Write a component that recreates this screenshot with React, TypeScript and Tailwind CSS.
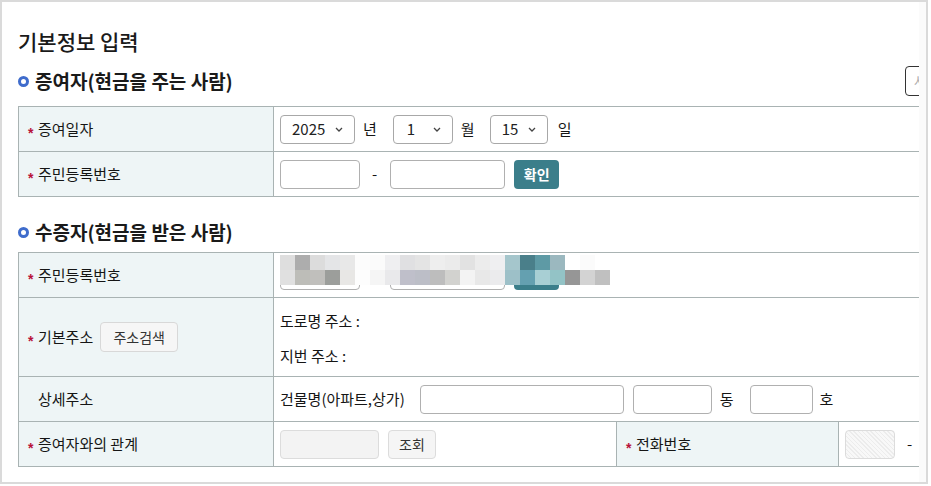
import React from 'react';

const line = 'border-[#a9b3b3]';

// blurred squares over the 수증자 주민번호 row
const mosaicTop = [
  'bg-[#dedede]', 'bg-[#adadad]', 'bg-[#dcdcdc]', 'bg-[#e4e5e7]', 'bg-[#e8e8e8]', 'bg-[#fcfcfc]', 'bg-[#fbfbfb]', 'bg-[#efeff1]',
  'bg-[#e0e0e2]', 'bg-[#e4e4e4]', 'bg-[#eeeeee]', 'bg-[#ebebeb]', 'bg-[#e2e2e2]', 'bg-[#ececec]', 'bg-[#efeff1]', 'bg-[#a5c6cc]',
  'bg-[#4a7f8a]', 'bg-[#5e9aa5]', 'bg-[#9bb8bf]', 'bg-[#ffffff]', 'bg-[#fbfbfb]', 'bg-[#ffffff]',
];
const mosaicBottom = [
  'bg-[#e0e0e0]', 'bg-[#bdbdb8]', 'bg-[#c0bfbc]', 'bg-[#9c9e9b]', 'bg-[#e8e7e5]', 'bg-[#fdfdfd]', 'bg-[#f5f5f5]', 'bg-[#e9e9eb]',
  'bg-[#bfbfca]', 'bg-[#bcbec7]', 'bg-[#bdbdbd]', 'bg-[#d2d2cf]', 'bg-[#f3f3f3]', 'bg-[#e8e8e8]', 'bg-[#ebebed]', 'bg-[#9dc0c8]',
  'bg-[#64a0b0]', 'bg-[#a8cfd4]', 'bg-[#93c3c6]', 'bg-[#969696]', 'bg-[#d3d3d3]', 'bg-[#c0c0c0]',
];

function Star({ hidden }: { hidden?: boolean }) {
  return (
    <span
      className={`inline-block w-[10px] translate-y-[4px] font-['Liberation_Sans',sans-serif] text-[14px] font-bold leading-none text-[#b8123a] ${hidden ? 'invisible' : ''}`}
    >
      *
    </span>
  );
}

function Label({ text, required = true, width = 'w-[255px]', children }: { text: string; required?: boolean; width?: string; children?: React.ReactNode }) {
  return (
    <div className={`flex ${width} shrink-0 items-center border-r ${line} bg-[#eef5f6] pl-[9px] text-[15px] text-[#151515]`}>
      <Star hidden={!required} />
      <span>{text}</span>
      {children}
    </div>
  );
}

function Heading({ text, button }: { text: string; button?: boolean }) {
  return (
    <div className="flex h-[30px] w-[960px] items-center">
      <span className="h-[11px] w-[11px] rounded-full border-[3px] border-[#3f6ccc]" />
      <span className="ml-[6px] text-[19px] font-semibold text-[#1a1a1a]">{text}</span>
      {button && (
        <button className="ml-auto h-[30px] w-[73px] rounded-[4px] border border-[#333] bg-white pl-[8px] text-left text-[13px] text-[#aaa]">
          사용안내
        </button>
      )}
    </div>
  );
}

function Select({ value, width, pl = 'pl-[11px]' }: { value: string; width: string; pl?: string }) {
  return (
    <div className={`flex h-[29px] ${width} items-center justify-between rounded-[4px] border border-[#a8a8a8] bg-white ${pl} pr-[11px] text-[15px] text-[#222]`}>
      <span>{value}</span>
      <svg width="8" height="5" viewBox="0 0 8 5" fill="none">
        <path d="M1 1l3 3 3-3" stroke="#444" strokeWidth="1.3" />
      </svg>
    </div>
  );
}

function Input({ width, extra = '' }: { width: string; extra?: string }) {
  return <div className={`h-[29px] ${width} rounded-[4px] border border-[#b0b0b0] bg-white ${extra}`} />;
}

function SsnInputs() {
  return (
    <>
      <Input width="w-[80px]" />
      <span className="ml-[12px] text-[15px]">-</span>
      <Input width="w-[115px]" extra="ml-[13px]" />
      <button className="ml-[9px] h-[29px] w-[45px] rounded-[4px] bg-[#3b7e8a] text-[14px] font-bold text-white">확인</button>
    </>
  );
}

export default function App() {
  return (
    <div className="h-[486px] w-[931px] bg-white font-['Noto_Sans_CJK_KR','Noto_Sans',sans-serif] text-[#151515]">
      <div className="flex h-[484px] w-[928px] border-2 border-[#dadada]">
        <div className="h-full w-[917px] overflow-hidden">
          <div className="w-[1100px] pl-[16px] pt-[25px]">
            <h1 className="h-[28px] text-[21px] font-medium leading-[28px] text-[#1a1a1a]">기본정보 입력</h1>

            <div className="mt-[11px]">
              <Heading text="증여자(현금을 주는 사람)" button />
            </div>

            <div className={`mt-[10px] w-[1000px] border-l border-t ${line}`}>
              <div className={`flex h-[45px] border-b ${line}`}>
                <Label text="증여일자" />
                <div className="flex items-center pl-[6px] text-[15px]">
                  <Select value="2025" width="w-[75px]" />
                  <span className="ml-[8px]">년</span>
                  <div className="ml-[16px]">
                    <Select value="1" width="w-[60px]" pl="pl-[13px]" />
                  </div>
                  <span className="ml-[8px]">월</span>
                  <div className="ml-[15px]">
                    <Select value="15" width="w-[58px]" />
                  </div>
                  <span className="ml-[10px]">일</span>
                </div>
              </div>
              <div className={`flex h-[45px] border-b ${line}`}>
                <Label text="주민등록번호" />
                <div className="flex items-center pl-[6px]">
                  <SsnInputs />
                </div>
              </div>
            </div>

            <div className="mt-[20px]">
              <Heading text="수증자(현금을 받은 사람)" />
            </div>

            <div className={`mt-[5px] w-[1000px] border-l border-t ${line}`}>
              <div className={`flex h-[45px] border-b ${line}`}>
                <Label text="주민등록번호" />
                <div className="relative flex items-center pl-[6px]">
                  <SsnInputs />
                  <div className="absolute left-[6px] top-[2px]">
                    {[mosaicTop, mosaicBottom].map((row, r) => (
                      <div key={r} className="flex">
                        {row.map((c, i) => (
                          <div key={i} className={`h-[15px] w-[15px] ${c}`} />
                        ))}
                      </div>
                    ))}
                  </div>
                </div>
              </div>

              <div className={`flex h-[79px] border-b ${line}`}>
                <Label text="기본주소">
                  <button className="ml-[7px] h-[30px] w-[78px] rounded-[4px] border border-[#d8d8d8] bg-[#f6f6f6] text-[14px] text-[#333]">
                    주소검색
                  </button>
                </Label>
                <div className="flex flex-col gap-[15px] pl-[6px] pt-[13px] text-[15px]">
                  <div className="h-[20px] leading-[20px]">도로명 주소 :</div>
                  <div className="h-[20px] leading-[20px]">지번 주소 :</div>
                </div>
              </div>

              <div className={`flex h-[45px] border-b ${line}`}>
                <Label text="상세주소" required={false} />
                <div className="flex items-center pl-[6px] text-[15px]">
                  <span>건물명(아파트,상가)</span>
                  <Input width="w-[204px]" extra="ml-[15px]" />
                  <Input width="w-[79px]" extra="ml-[9px]" />
                  <span className="ml-[8px]">동</span>
                  <Input width="w-[63px]" extra="ml-[16px]" />
                  <span className="ml-[7px]">호</span>
                </div>
              </div>

              <div className={`flex h-[45px] border-b ${line}`}>
                <Label text="증여자와의 관계" />
                <div className={`flex w-[343px] shrink-0 items-center border-r ${line} pl-[6px]`}>
                  <div className="h-[29px] w-[99px] rounded-[4px] border border-[#dcdcdc] bg-[#f3f3f3]" />
                  <button className="ml-[9px] h-[29px] w-[48px] rounded-[4px] border border-[#dcdcdc] bg-[#f5f5f5] text-[14px] text-[#333]">
                    조회
                  </button>
                </div>
                <Label text="전화번호" width="w-[222px]" />
                <div className="flex items-center pl-[6px] text-[15px]">
                  <div className="h-[29px] w-[50px] rounded-[4px] border border-[#dcdcdc] bg-[repeating-linear-gradient(45deg,#ececec_0px,#ececec_1px,#f8f8f8_1px,#f8f8f8_3px)]" />
                  <span className="ml-[12px]">-</span>
                </div>
              </div>
            </div>
          </div>
        </div>
        <div className="h-full flex-1 bg-[#fbfbfb]" />
      </div>
    </div>
  );
}
